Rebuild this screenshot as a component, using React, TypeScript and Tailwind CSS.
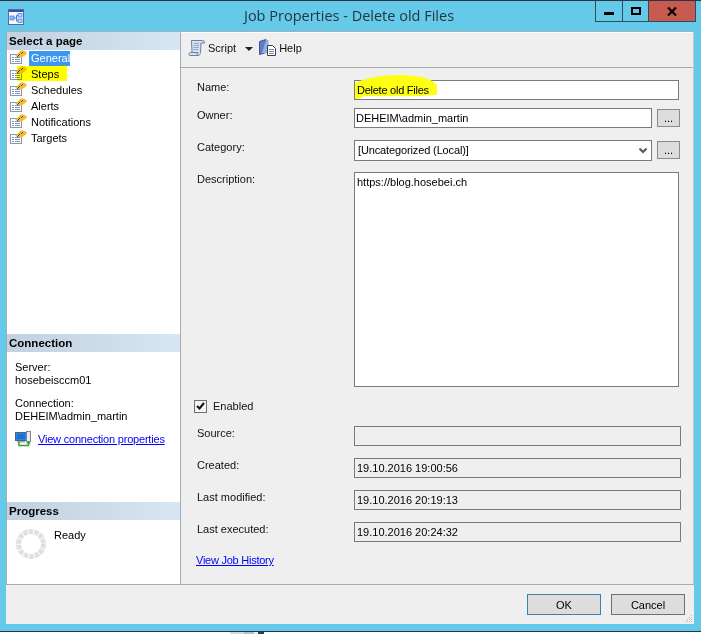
const pages = ['General', 'Steps', 'Schedules', 'Alerts', 'Notifications', 'Targets']

function PageIcon() {
  return (
    <svg width="17" height="14" viewBox="0 0 17 14" className="shrink-0 -mt-[2px]">
      <rect x="0.500" y="4.500" width="11" height="9" fill="#fff" stroke="#8a97ab" />
      <path d="M2 7.500h2M5 7.500h5M2 9.500h2M5 9.500h5M2 11.500h2M5 11.500h5" stroke="#7d96c8" />
      <path d="M5.500 6 10.500 0.500h3.500l3 2-1 2-5 3.500z" fill="#f2bc3c" />
      <path d="M7 6h1V5h1V4h1v1H9v1H8v1H7zM11 3h1V2h1v1h-1v1h-1z" fill="#4a4636" />
    </svg>
  )
}

function ScriptIcon() {
  return (
    <svg width="17" height="18" viewBox="0 0 17 18">
      <path d="M3.500 1.500h11c1.500 0 2 1 2 2.500h-3.500l-0.500 9.500c0 1.500-1 3-2.500 3h-8c-1.500 0-1.500-2.500 0.500-3h1.500z" fill="#d4e0f0" stroke="#6a80a4" />
      <path d="M6 4.500h5M5.500 6.500h5.500M5.500 8.500h5.500M5 10.500h5.500" stroke="#93a8c8" />
      <path d="M3 13.500h7c-1 1-1 2-0.500 3" fill="none" stroke="#6a80a4" />
    </svg>
  )
}

function HelpIcon() {
  return (
    <svg width="17" height="18" viewBox="0 0 17 18">
      <path d="M0.500 2.500 7 0.500v13l-6.500 2z" fill="#5f7dc6" stroke="#3c5096" />
      <path d="M7 1h2.500v13H3z" fill="#97ade0" />
      <path d="M8.500 6.500h5l3 3v7h-8z" fill="#fff" stroke="#34425c" />
      <path d="M10 10.500h5M10 12.500h5M10 14.500h5" stroke="#7d8aa8" />
    </svg>
  )
}

function WindowIcon() {
  return (
    <svg width="16" height="16" viewBox="0 0 16 16">
      <rect x="0.500" y="0.500" width="15" height="15" fill="#f6f9fe" stroke="#5a68a8" />
      <rect x="1" y="1" width="14" height="2" fill="#3a4ea4" />
      <rect x="2" y="7" width="4" height="4" fill="#8cc0f4" stroke="#3f78d4" strokeWidth="0.700" />
      <rect x="10" y="4.500" width="4" height="3.500" fill="#b4d6f8" stroke="#3f78d4" strokeWidth="0.700" />
      <rect x="10" y="10" width="4" height="3.500" fill="#b4d6f8" stroke="#3f78d4" strokeWidth="0.700" />
      <path d="M6 9h2.500M8.500 6.500v5.500M8.500 6.500H10M8.500 12H10" stroke="#3f78d4" fill="none" />
    </svg>
  )
}

function ConnectionIcon() {
  return (
    <svg width="17" height="16" viewBox="0 0 17 16" className="shrink-0">
      <rect x="0.500" y="1.500" width="11" height="8" fill="#2f86e6" stroke="#50607a" />
      <rect x="2" y="3" width="8" height="5" fill="#1d6fd8" />
      <rect x="2" y="10" width="8" height="1.500" fill="#9aa4b4" />
      <rect x="11.500" y="0.500" width="4" height="10" fill="#e8ecf2" stroke="#7c8698" />
      <path d="M13.500 11v3.500H4V11" fill="none" stroke="#2ea02e" strokeWidth="1.500" />
      <path d="M11 12.500 13.500 10 16 12.500z" fill="#2ea02e" />
    </svg>
  )
}

function Spinner() {
  return (
    <svg width="32" height="32" viewBox="0 0 32 32">
      <circle cx="16" cy="16" r="12.500" fill="none" stroke="#e0e0e0" strokeWidth="5" strokeDasharray="4.610 1" />
    </svg>
  )
}

function SectionHeader({ title }: { title: string }) {
  return (
    <div className="h-[18px] pl-[2px] pt-[1px] flex items-center bg-gradient-to-r from-[#c2d1df] to-[#d8e6f4] text-[11.500px] font-bold text-black">
      {title}
    </div>
  )
}

function Label({ text }: { text: string }) {
  return <div className="w-[157px] shrink-0 h-[14px] leading-[14px] text-[#111]">{text}</div>
}

function ReadOnlyRow({ label, value, className }: { label: string; value?: string; className: string }) {
  return (
    <div className={`flex ${className}`}>
      <Label text={label} />
      <div className="w-[327px] h-[20px] border border-[#7a7a7a] bg-[#efefef] pl-[2px] leading-[19px] text-black">{value}</div>
    </div>
  )
}

function EllipsisButton() {
  return (
    <div className="w-[23px] h-[18px] mt-[1px] ml-[5px] border border-[#8a8a8a] bg-[#dddddd] text-center leading-[17px] text-black">...</div>
  )
}

export default function App() {
  return (
    <div className="w-[701px] h-[634px] bg-white overflow-hidden text-[11px] [font-family:'Liberation_Sans',Arial,sans-serif]">
      <div className="h-[632px] bg-[#65c9ea] border-t border-b border-[#2a3640]">
        <div className="h-[30px] flex items-start relative">
          <div className="ml-[8px] mt-[8px]"><WindowIcon /></div>
          <div className="ml-[220px] mt-[5px] text-[14.500px] leading-[20px] text-[#26343e] [font-family:'Open_Sans',sans-serif]">
            Job Properties - Delete old Files
          </div>
          <div className="absolute top-0 right-[5px] h-[21px] flex border border-t-0 border-[#2f4b5c]">
            <div className="w-[27px] border-r border-[#2f4b5c] flex justify-center items-start pt-[11px]">
              <div className="w-[10px] h-[3px] bg-black" />
            </div>
            <div className="w-[26px] border-r border-[#2f4b5c] flex justify-center items-start pt-[6px]">
              <div className="w-[10px] h-[8px] border-2 border-black" />
            </div>
            <div className="w-[46px] bg-[#c75b50] flex justify-center items-start pt-[6px]">
              <svg width="10" height="9" viewBox="0 0 10 9"><path d="M1 0.500 9 8.500M9 0.500 1 8.500" stroke="#000" strokeWidth="2.200" /></svg>
            </div>
          </div>
        </div>

        <div className="ml-[6px] w-[688px] h-[593px] bg-[#efefef] border-t border-[#a0b0ba] flex flex-col">
          <div className="h-[553px] flex border-b border-[#aaaab4]">
            <div className="w-[175px] shrink-0 bg-white border-x border-[#aaaab4] flex flex-col">
              <div className="h-[302px]">
                <SectionHeader title="Select a page" />
                <div className="pl-[3px]">
                  {pages.map((page) => (
                    <div key={page} className="relative h-[16px] flex items-center">
                      <PageIcon />
                      {page === 'General' ? (
                        <span className="ml-[2px] pl-[2px] w-[41px] h-[15px] leading-[15px] bg-[#3d96f0] text-white">{page}</span>
                      ) : (
                        <span className="ml-[4px] text-black">{page}</span>
                      )}
                      {page === 'Steps' && (
                        <>
                          <span className="absolute left-[7px] top-0 w-[50px] h-[15px] bg-[#ffff00] mix-blend-multiply" />
                          <span className="absolute left-[50px] -top-[1px] w-[6px] h-[1px] bg-[#5fb04a]" />
                        </>
                      )}
                    </div>
                  ))}
                </div>
              </div>

              <div className="h-[168px]">
                <SectionHeader title="Connection" />
                <div className="pl-[8px] pt-[9px] leading-[13px] text-black">
                  <div>Server:</div>
                  <div>hosebeisccm01</div>
                  <div className="mt-[10px]">Connection:</div>
                  <div>DEHEIM\admin_martin</div>
                  <div className="mt-[8px] flex items-center gap-[6px] h-[16px]">
                    <ConnectionIcon />
                    <span className="text-[#0000ff] underline tracking-[-0.2px]">View connection properties</span>
                  </div>
                </div>
              </div>

              <div className="flex-1">
                <SectionHeader title="Progress" />
                <div className="pl-[8px] pt-[8px] flex items-start">
                  <Spinner />
                  <span className="ml-[7px] leading-[14px] text-black">Ready</span>
                </div>
              </div>
            </div>

            <div className="flex-1 flex flex-col border-r border-[#c8c8c8]">
              <div className="h-[36px] shrink-0 border-t border-white border-b border-b-[#aaaaaa] flex items-center pl-[7px] pb-[4px] text-[#111]">
                <ScriptIcon />
                <span className="ml-[3px]">Script</span>
                <span className="ml-[9px] mt-[1px] w-0 h-0 border-x-[4px] border-x-transparent border-t-[4px] border-t-[#222]" />
                <span className="ml-[6px]"><HelpIcon /></span>
                <span className="ml-[3px]">Help</span>
              </div>

              <div className="pl-[16px] pt-[12px]">
                <div className="flex">
                  <Label text="Name:" />
                  <div className="relative w-[325px] h-[20px] border border-[#7a7a7a] bg-white pl-[2px] leading-[19px] text-black">
                    <svg width="84" height="26" viewBox="0 0 84 26" className="absolute left-[0px] top-[-7px]">
                      <path d="M0 9C8 5 25 1 42 1 60 1 75 3 82 11V21C60 23 20 22 10 22 6 23 3 25 1 25H0z" fill="#ffff14" />
                    </svg>
                    <span className="relative tracking-[-0.25px]">Delete old Files</span>
                  </div>
                </div>

                <div className="flex mt-[8px]">
                  <Label text="Owner:" />
                  <div className="w-[298px] h-[20px] border border-[#7a7a7a] bg-white pl-[1px] leading-[19px] text-black">DEHEIM\admin_martin</div>
                  <EllipsisButton />
                </div>

                <div className="flex mt-[12px]">
                  <Label text="Category:" />
                  <div className="w-[298px] h-[21px] border border-[#7a7a7a] bg-white pl-[3px] pr-[4px] flex items-center justify-between text-black">
                    <span className="tracking-[-0.13px]">[Uncategorized (Local)]</span>
                    <svg width="8" height="6" viewBox="0 0 8 6"><path d="M0.500 0.500 4 4l3.500-3.500" fill="none" stroke="#555" strokeWidth="2" /></svg>
                  </div>
                  <EllipsisButton />
                </div>

                <div className="flex mt-[11px]">
                  <Label text="Description:" />
                  <div className="w-[325px] h-[215px] border border-[#7a7a7a] bg-white pl-[2px] pt-[2px] leading-[14px] text-black">https://blog.hosebei.ch</div>
                </div>

                <div className="flex items-center h-[14px] mt-[12px] -ml-[3px]">
                  <div className="w-[13px] h-[13px] border border-[#707070] bg-[#f4f4f4] flex items-center justify-center">
                    <svg width="9" height="8" viewBox="0 0 9 8"><path d="M1 4l2.500 2.500L8 1" fill="none" stroke="#111" strokeWidth="2" /></svg>
                  </div>
                  <span className="ml-[6px] text-[#111]">Enabled</span>
                </div>

                <ReadOnlyRow label="Source:" className="mt-[13px]" />
                <ReadOnlyRow label="Created:" value="19.10.2016 19:00:56" className="mt-[12px]" />
                <ReadOnlyRow label="Last modified:" value="19.10.2016 20:19:13" className="mt-[12px]" />
                <ReadOnlyRow label="Last executed:" value="19.10.2016 20:24:32" className="mt-[12px]" />

                <div className="mt-[11px] -ml-[1px] leading-[14px] text-[#0000ff] underline tracking-[-0.25px]">View Job History</div>
              </div>
            </div>
          </div>

          <div className="flex-1 relative flex justify-end gap-[10px] pt-[9px] pr-[9px] text-black">
            <div className="w-[74px] h-[21px] border border-[#3c7fb1] bg-[#dddddd] text-center leading-[20px]">OK</div>
            <div className="w-[74px] h-[21px] border border-[#707070] bg-[#dddddd] text-center leading-[20px]">Cancel</div>
            <svg width="9" height="9" viewBox="0 0 9 9" className="absolute right-[1px] bottom-[1px]">
              <path d="M7 1h1v1H7zM5 3h1v1H5zM7 3h1v1H7zM3 5h1v1H3zM5 5h1v1H5zM7 5h1v1H7zM1 7h1v1H1zM3 7h1v1H3zM5 7h1v1H5zM7 7h1v1H7z" fill="#b4b4b4" />
            </svg>
          </div>
        </div>
      </div>
      <div className="flex pl-[230px]">
        <div className="w-[14px] h-[2px] bg-[#d8d8d8]" />
        <div className="w-[10px] h-[2px] bg-[#b4c0d4]" />
        <div className="w-[4px] h-[2px] bg-[#eeeeee]" />
        <div className="w-[6px] h-[2px] bg-[#2a3c64]" />
      </div>
    </div>
  )
}
